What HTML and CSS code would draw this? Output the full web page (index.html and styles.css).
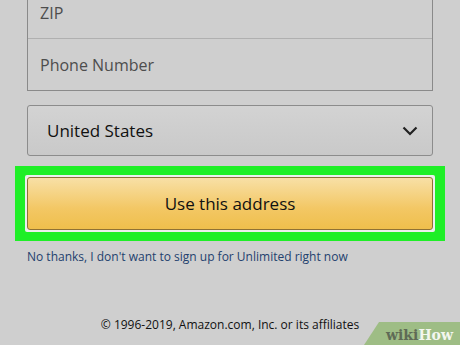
FILE: index.html
```html
<!DOCTYPE html>
<html>
<head>
<meta charset="utf-8">
<link rel="stylesheet" href="styles.css">
</head>
<body>
<div class="page">
  <div class="fields">
    <div class="field">ZIP</div>
    <div class="field">Phone Number</div>
  </div>
  <div class="select">
    <span>United States</span>
    <svg class="chev" width="16" height="10" viewBox="0 0 16 10"><path d="M1.5 1.5 L8 8 L14.5 1.5" fill="none" stroke="#222" stroke-width="2.2"/></svg>
  </div>
  <div class="highlight">
    <div class="halo">
      <div class="btn">Use this address</div>
    </div>
  </div>
  <div class="link">No thanks, I don't want to sign up for Unlimited right now</div>
  <div class="copy">© 1996-2019, Amazon.com, Inc. or its affiliates</div>
  <div class="wiki"><span class="w1">wiki</span><span class="w2">How</span></div>
</div>
</body>
</html>
```
FILE: styles.css
```css
html, body {
  margin: 0;
  padding: 0;
}
body {
  background: #cfcfcf;
  font-family: "Open Sans", "Noto Sans", sans-serif;
  width: 460px;
  height: 345px;
  overflow: hidden;
}
.page {
  position: relative;
  width: 460px;
  height: 345px;
  display: flex;
  flex-direction: column;
  align-items: center;
}
.fields {
  margin-top: -13px;
  width: 404px;
  border: 1px solid #8a8a8a;
  border-top: none;
  box-sizing: content-box;
}
.field {
  height: 51px;
  display: flex;
  align-items: center;
  padding-left: 12px;
  font-size: 16px;
  color: #4d4d4d;
}
.field + .field {
  border-top: 1px solid #b0b0b0;
}
.select {
  margin-top: 14px;
  width: 406px;
  height: 51px;
  box-sizing: border-box;
  border: 1px solid #8c8c8c;
  border-radius: 3px;
  background: linear-gradient(#d3d3d3, #c9c9c9);
  display: flex;
  align-items: center;
  justify-content: space-between;
  padding: 0 14px 0 19px;
  font-size: 17px;
  color: #111;
}
.chev {
  display: block;
  margin-top: 1px;
}
.highlight {
  margin-top: 10px;
  width: 430px;
  height: 75px;
  box-sizing: border-box;
  background: #1fef27;
  padding: 9px 10px;
}
.halo {
  height: 100%;
  box-sizing: border-box;
  background: #eeeeee;
  padding: 2px;
  border-radius: 2px;
}
.btn {
  height: 100%;
  box-sizing: border-box;
  border: 1px solid #8f7235;
  border-radius: 3px;
  background: linear-gradient(#f8e0a6, #f3c764 60%, #efbf4c);
  display: flex;
  align-items: center;
  justify-content: center;
  font-size: 17px;
  color: #111;
}
.link {
  align-self: flex-start;
  margin-left: 27px;
  margin-top: 7px;
  font-size: 12px;
  color: #23416e;
}
.copy {
  margin-top: 51px;
  font-size: 12px;
  color: #111;
}
.wiki {
  position: absolute;
  right: 0;
  bottom: 0;
  width: 96px;
  height: 23px;
  background: #9ebd85;
  clip-path: polygon(15px 0, 100% 0, 100% 100%, 0 100%);
  display: flex;
  align-items: center;
  padding-left: 22px;
  padding-top: 2px;
  box-sizing: border-box;
  font-family: "DejaVu Serif", "Liberation Serif", serif;
  font-weight: bold;
  font-size: 14px;
}
.w1 { color: #5f6b56; }
.w2 { color: #f3f6ef; }
```
